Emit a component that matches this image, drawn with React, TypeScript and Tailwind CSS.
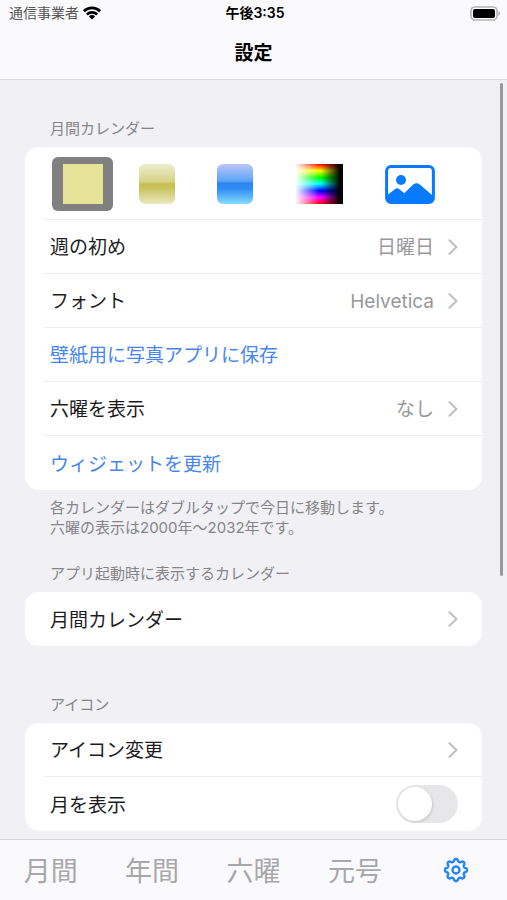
import type { ReactNode } from 'react'

type RowProps = {
  label: string
  value?: string
  action?: boolean
}

const WifiIcon = () => (
  <svg viewBox="0 0 18 14" className="h-[14px] w-[18px]" aria-hidden="true">
    <g fill="none" stroke="#000" strokeWidth="2.6">
      <path d="M0.9 5.2a11.6 11.6 0 0 1 16.2 0" />
      <path d="M3.9 8.5a7.3 7.3 0 0 1 10.2 0" />
    </g>
    <path d="M9 13.6 5.9 10.4a4.4 4.4 0 0 1 6.2 0z" />
  </svg>
)

const BatteryIcon = () => (
  <svg viewBox="0 0 31 15" className="h-[15px] w-[31px]" aria-hidden="true">
    <rect x="1" y="1" width="26" height="13" rx="4" fill="#fff" stroke="#b4b4b6" strokeWidth="1.6" />
    <rect x="3" y="3" width="22" height="9" rx="2" />
    <path d="M28.4 5v5c2.2-.7 2.2-4.3 0-5z" fill="#b4b4b6" />
  </svg>
)

const ChevronIcon = () => (
  <svg viewBox="0 0 10 16" className="h-4 w-[10px] shrink-0" aria-hidden="true">
    <path
      d="M1.5 1.2 8.4 8l-6.9 6.8"
      fill="none"
      stroke="#c2c2c5"
      strokeWidth="2.2"
      strokeLinecap="round"
      strokeLinejoin="round"
    />
  </svg>
)

const PhotoIcon = () => (
  <svg viewBox="0 0 50 39" className="h-[39px] w-[50px]" aria-hidden="true">
    <rect x="1.6" y="1.6" width="46.8" height="35.8" rx="4.5" fill="#fff" stroke="#087aff" strokeWidth="3" />
    <circle cx="16" cy="15" r="5" fill="#087aff" />
    <path
      d="M3 29.5 10.200 24q2.200-1.600 4.200.2l4.800 4 9-8.600q3.300-2.800 6.600 0L47 30v6.500H3z"
      fill="#087aff"
    />
  </svg>
)

const gearPath =
  Array.from({ length: 144 }, (_, i) => {
    const angle = (i / 144) * Math.PI * 2
    const radius = 9.8 + 1.3 * Math.tanh(1.6 * Math.cos(8 * angle))
    const x = 13 + radius * Math.cos(angle)
    const y = 13 + radius * Math.sin(angle)
    return `${i === 0 ? 'M' : 'L'}${x.toFixed(2)} ${y.toFixed(2)}`
  }).join('') + 'Z'

const GearIcon = () => (
  <svg viewBox="0 0 26 26" className="size-[26px]" aria-hidden="true">
    <g fill="none" stroke="#2684f5" strokeWidth="2.4" strokeLinejoin="round">
      <path d={gearPath} />
      <circle cx="13" cy="13" r="3.5" />
    </g>
  </svg>
)

const SpectrumIcon = () => (
  <svg viewBox="0 0 48 40" className="h-10 w-12" aria-hidden="true">
    <defs>
      <linearGradient id="hue" x1="0" y1="0" x2="0" y2="1">
        <stop offset="0" stopColor="#f00" />
        <stop offset="0.17" stopColor="#ff0" />
        <stop offset="0.34" stopColor="#0f0" />
        <stop offset="0.5" stopColor="#0ff" />
        <stop offset="0.67" stopColor="#00f" />
        <stop offset="0.84" stopColor="#f0f" />
        <stop offset="1" stopColor="#f00" />
      </linearGradient>
      <linearGradient id="shade">
        <stop offset="0" stopColor="#fff" />
        <stop offset="0.5" stopColor="#fff" stopOpacity="0" />
        <stop offset="0.54" stopColor="#000" stopOpacity="0" />
        <stop offset="0.94" stopColor="#000" />
      </linearGradient>
    </defs>
    <rect width="48" height="40" fill="url(#hue)" />
    <rect width="48" height="40" fill="url(#shade)" />
  </svg>
)

const Row = ({ label, value, action }: RowProps) => (
  <button type="button" className="flex h-full w-full items-center pr-1 text-left">
    <span className={action ? 'pt-1 text-[#4886ee]' : 'pt-1 text-[#1c1c1e]'}>{label}</span>
    {value && <span className="ml-auto pt-1 text-[#98989b]">{value}</span>}
    {!action && (
      <span className={value ? 'ml-[14px]' : 'ml-auto'}>
        <ChevronIcon />
      </span>
    )}
  </button>
)

const Card = ({ children }: { children: ReactNode }) => (
  <ul className="divide-y divide-[#ececef] rounded-[14px] bg-white pl-[19px] text-[19px]">{children}</ul>
)

const Item = ({ children }: { children: ReactNode }) => (
  <li className="h-[54px] pr-5 pl-[6px]">{children}</li>
)

const Label = ({ children }: { children: ReactNode }) => (
  <h2 className="px-[25px] pb-2 text-[15px] leading-5 text-[#858589]">{children}</h2>
)

const tabs = ['月間', '年間', '六曜', '元号']

export default function App() {
  return (
    <div className="flex h-screen flex-col bg-[#f0f0f5] font-['Inter','Noto_Sans_CJK_JP',sans-serif]">
      <header className="shrink-0 border-b border-[#d9d9dd] bg-[#fafafc]">
        <div className="grid h-[26px] grid-cols-3 items-center pr-[6px] pl-[9px] text-[14px] leading-5">
          <div className="flex items-center gap-1 text-[#555]">
            通信事業者
            <WifiIcon />
          </div>
          <div className="text-center font-semibold text-black">午後3:35</div>
          <div className="flex justify-end">
            <BatteryIcon />
          </div>
        </div>
        <h1 className="flex h-[53px] items-center justify-center pt-1 text-[19px] font-bold text-black">設定</h1>
      </header>

      <main className="relative min-h-0 flex-1 overflow-hidden">
        <div className="px-[25px] pt-[39px]">
          <section>
            <Label>月間カレンダー</Label>
            <Card>
              <li className="flex h-[73px] items-center gap-[42px] pt-[2px] pl-2">
                <button
                  type="button"
                  aria-label="単色"
                  aria-pressed="true"
                  className="-mr-4 flex h-[54px] w-[61px] items-center justify-center rounded-md bg-[#808080]"
                >
                  <span className="size-10 bg-[#e6e297]" />
                </button>
                <button
                  type="button"
                  aria-label="黄色"
                  className="h-10 w-9 rounded-md bg-[linear-gradient(#efedcf,#d6d283_45%,#c4bf52_50%,#c9c563_62%,#ebe8c0)]"
                />
                <button
                  type="button"
                  aria-label="青"
                  className="h-10 w-9 rounded-md bg-[linear-gradient(#bcc6fa,#5ba4f6_43%,#2b85f0_48%,#2f8df5_62%,#86dcfd)]"
                />
                <button type="button" aria-label="カラー">
                  <SpectrumIcon />
                </button>
                <button type="button" aria-label="写真">
                  <PhotoIcon />
                </button>
              </li>
              <Item>
                <Row label="週の初め" value="日曜日" />
              </Item>
              <Item>
                <Row label="フォント" value="Helvetica" />
              </Item>
              <Item>
                <Row label="壁紙用に写真アプリに保存" action />
              </Item>
              <Item>
                <Row label="六曜を表示" value="なし" />
              </Item>
              <Item>
                <Row label="ウィジェットを更新" action />
              </Item>
            </Card>
            <p className="px-[25px] pt-2 text-[15px] leading-5 text-[#858589]">
              各カレンダーはダブルタップで今日に移動します。
              <br />
              六曜の表示は2000年〜2032年です。
            </p>
          </section>

          <section className="mt-[26px]">
            <Label>アプリ起動時に表示するカレンダー</Label>
            <Card>
              <Item>
                <Row label="月間カレンダー" />
              </Item>
            </Card>
          </section>

          <section className="mt-[49px]">
            <Label>アイコン</Label>
            <Card>
              <Item>
                <Row label="アイコン変更" />
              </Item>
              <Item>
                <label className="flex h-full items-center justify-between pr-1 text-[#1c1c1e]">
                  <span className="pt-1">月を表示</span>
                  <input
                    type="checkbox"
                    role="switch"
                    className="flex h-[38px] w-[62px] appearance-none items-center rounded-full bg-[#e7e7e9] px-[2px] before:size-[34px] before:rounded-full before:bg-white before:shadow-[1px_1px_3px_rgba(0,0,0,0.15)] checked:bg-[#34c759] checked:before:ml-auto"
                  />
                </label>
              </Item>
            </Card>
          </section>
        </div>
        {/* scroll indicator */}
        <div className="absolute top-[3px] right-1 h-[493px] w-[3px] rounded-full bg-[#98989d]" />
      </main>

      <nav className="grid h-[61px] shrink-0 grid-cols-5 border-t border-[#d9d9dd] bg-[#fafafc]">
        {tabs.map((tab) => (
          <button key={tab} type="button" className="pt-1 text-[27px] leading-8 text-[#a8a8aa]">
            {tab}
          </button>
        ))}
        <button type="button" aria-label="設定" className="flex items-center justify-center">
          <GearIcon />
        </button>
      </nav>
    </div>
  )
}
